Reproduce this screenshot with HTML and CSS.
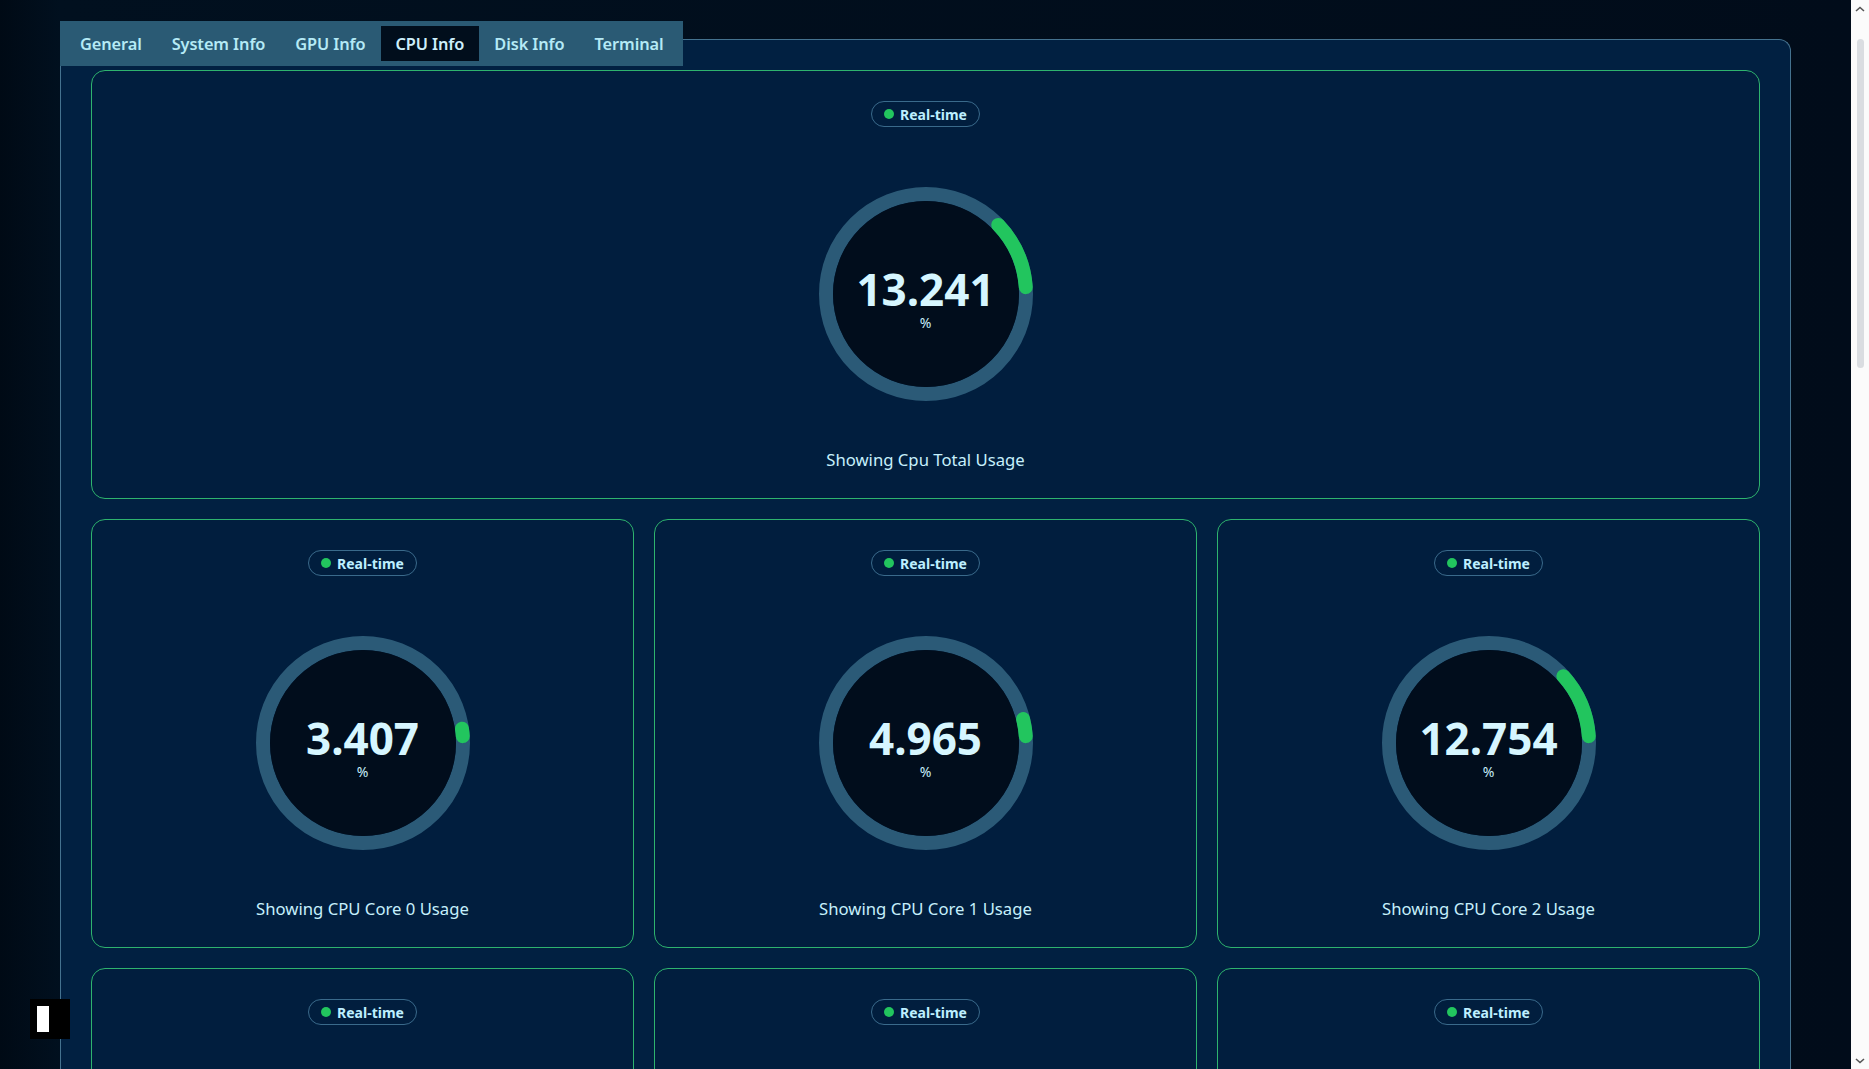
FILE: index.html
```html
<!DOCTYPE html>
<html lang="en">
<head>
<meta charset="utf-8">
<title>CPU Info</title>
<link rel="stylesheet" href="styles.css">
</head>
<body>
<div class="layout">
  <div class="page">
    <nav class="tabs">
      <span class="tab">General</span>
      <span class="tab">System Info</span>
      <span class="tab">GPU Info</span>
      <span class="tab active">CPU Info</span>
      <span class="tab">Disk Info</span>
      <span class="tab">Terminal</span>
    </nav>
    <main class="panel">
      <section class="card wide">
        <span class="badge"><i class="dot"></i>Real-time</span>
        <div class="gauge">
          <svg viewBox="0 0 214 214" width="214" height="214">
            <circle cx="107" cy="107" r="100" class="ring"/>
            <circle cx="107" cy="107" r="93" class="core"/>
            <circle cx="107" cy="107" r="100" class="arc" transform="matrix(1 0 0 -1 0 214)" stroke-dasharray="69.2 700" stroke-dashoffset="-7"/>
          </svg>
          <div class="readout"><span class="value">13.241</span><span class="unit">%</span></div>
        </div>
        <p class="label">Showing Cpu Total Usage</p>
      </section>
      <section class="card">
        <span class="badge"><i class="dot"></i>Real-time</span>
        <div class="gauge">
          <svg viewBox="0 0 214 214" width="214" height="214">
            <circle cx="107" cy="107" r="100" class="ring"/>
            <circle cx="107" cy="107" r="93" class="core"/>
            <circle cx="107" cy="107" r="100" class="arc" transform="matrix(1 0 0 -1 0 214)" stroke-dasharray="7.4 700" stroke-dashoffset="-7"/>
          </svg>
          <div class="readout"><span class="value">3.407</span><span class="unit">%</span></div>
        </div>
        <p class="label">Showing CPU Core 0 Usage</p>
      </section>
      <section class="card">
        <span class="badge"><i class="dot"></i>Real-time</span>
        <div class="gauge">
          <svg viewBox="0 0 214 214" width="214" height="214">
            <circle cx="107" cy="107" r="100" class="ring"/>
            <circle cx="107" cy="107" r="93" class="core"/>
            <circle cx="107" cy="107" r="100" class="arc" transform="matrix(1 0 0 -1 0 214)" stroke-dasharray="17.2 700" stroke-dashoffset="-7"/>
          </svg>
          <div class="readout"><span class="value">4.965</span><span class="unit">%</span></div>
        </div>
        <p class="label">Showing CPU Core 1 Usage</p>
      </section>
      <section class="card">
        <span class="badge"><i class="dot"></i>Real-time</span>
        <div class="gauge">
          <svg viewBox="0 0 214 214" width="214" height="214">
            <circle cx="107" cy="107" r="100" class="ring"/>
            <circle cx="107" cy="107" r="93" class="core"/>
            <circle cx="107" cy="107" r="100" class="arc" transform="matrix(1 0 0 -1 0 214)" stroke-dasharray="66.1 700" stroke-dashoffset="-7"/>
          </svg>
          <div class="readout"><span class="value">12.754</span><span class="unit">%</span></div>
        </div>
        <p class="label">Showing CPU Core 2 Usage</p>
      </section>
      <section class="card">
        <span class="badge"><i class="dot"></i>Real-time</span>
      </section>
      <section class="card">
        <span class="badge"><i class="dot"></i>Real-time</span>
      </section>
      <section class="card">
        <span class="badge"><i class="dot"></i>Real-time</span>
      </section>
    </main>
  </div>
  <aside class="scrollbar">
    <svg class="arrow" viewBox="0 0 10 6" width="10" height="6"><path d="M1 5 L5 1.5 L9 5" fill="none" stroke="#555" stroke-width="1.6"/></svg>
    <div class="track"><div class="thumb"></div></div>
    <svg class="arrow" viewBox="0 0 10 6" width="10" height="6"><path d="M1 1 L5 4.5 L9 1" fill="none" stroke="#555" stroke-width="1.6"/></svg>
  </aside>
</div>
<div class="widget"><span class="widget-bar"></span></div>
</body>
</html>
```

FILE: styles.css
```css
html, body {
  margin: 0;
  height: 100%;
  overflow: hidden;
}
body {
  background: #010c1a;
  font-family: "Noto Sans", "Open Sans", sans-serif;
  color: #c6f0fc;
}
.layout {
  display: flex;
  height: 100vh;
}
.page {
  flex: 1;
  padding: 21px 60px 0 60px;
  min-width: 0;
  background: linear-gradient(90deg, #000a15 0px, #01101f 60px, #010c1a 100%);
}
.tabs {
  display: flex;
  width: fit-content;
  height: 45px;
  box-sizing: border-box;
  padding: 5px 4px 5px 5px;
  background: #2a5a74;
  position: relative;
  z-index: 1;
}
.tab {
  display: block;
  height: 35px;
  line-height: 37px;
  padding: 0 15px;
  font-size: 16.35px;
  font-weight: 600;
  color: #b5eaf6;
  letter-spacing: -0.1px;
}
.tab.active {
  background: #010e1c;
  color: #cdeffb;
}
.panel {
  margin-top: -27px;
  border: 1px solid #44728f;
  border-bottom: none;
  border-radius: 0 12px 0 0;
  background: #012041;
  padding: 30px 30px 0 30px;
  height: 1400px;
  display: grid;
  grid-template-columns: repeat(3, 1fr);
  grid-auto-rows: 429px;
  gap: 20px;
  align-content: start;
}
.card {
  box-sizing: border-box;
  border: 1px solid #2eb36e;
  border-radius: 14px;
  background: #011e3e;
  padding-top: 30px;
  display: flex;
  flex-direction: column;
  align-items: center;
}
.card.wide {
  grid-column: 1 / -1;
}
.badge {
  display: inline-flex;
  align-items: center;
  gap: 6px;
  box-sizing: border-box;
  height: 26px;
  padding: 0 12px 0 12px;
  border: 1px solid #3a6a8b;
  border-radius: 13px;
  font-size: 14px;
  font-weight: 700;
  color: #bdefff;
}
.dot {
  display: block;
  width: 10px;
  height: 10px;
  border-radius: 50%;
  background: #22c55e;
}
.gauge {
  margin-top: 60px;
  width: 214px;
  height: 214px;
  display: grid;
}
.gauge > svg,
.gauge > .readout {
  grid-area: 1 / 1;
}
.ring {
  fill: none;
  stroke: #2b5a77;
  stroke-width: 14;
}
.core {
  fill: #010d1c;
}
.arc {
  fill: none;
  stroke: #22c55e;
  stroke-width: 14;
  stroke-linecap: round;
}
.readout {
  display: flex;
  flex-direction: column;
  align-items: center;
  justify-content: center;
  padding-top: 9px;
}
.value {
  font-size: 44px;
  line-height: 44px;
  font-weight: 700;
  color: #d6f6ff;
}
.unit {
  margin-top: 5px;
  font-size: 14px;
  line-height: 14px;
  color: #c8eefa;
}
.label {
  margin: 47px 0 0 0;
  font-size: 16.7px;
  line-height: 24px;
  color: #c6f0fc;
}
.scrollbar {
  width: 18px;
  background: #fbfbfb;
  display: flex;
  flex-direction: column;
  align-items: center;
  padding: 6px 0 5px 0;
  box-sizing: border-box;
}
.arrow {
  flex: none;
}
.track {
  flex: 1;
  width: 100%;
  display: flex;
  justify-content: center;
  padding-top: 27px;
}
.thumb {
  width: 7px;
  height: 329px;
  border-radius: 4px;
  background: #dadde1;
}
.widget {
  position: fixed;
  left: 30px;
  top: 999px;
  width: 40px;
  height: 40px;
  background: #000;
}
.widget-bar {
  position: absolute;
  left: 7px;
  top: 7px;
  width: 12px;
  height: 26px;
  background: #fff;
}
```
